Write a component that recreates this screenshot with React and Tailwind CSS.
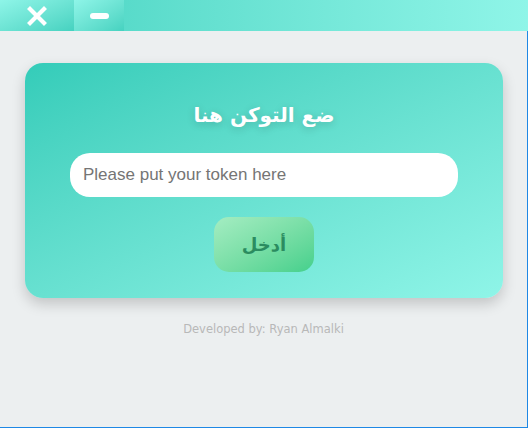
import { useState } from "react";

function TitleBar() {
  return (
    <div className="flex h-[31px] bg-gradient-to-r from-[#43d3c1] to-[#8ff5e8]">
      <button className="flex w-[74px] items-center justify-center bg-gradient-to-br from-[#8ef5e8] to-[#45d2c0]">
        <svg width="20" height="20" viewBox="0 0 20 20">
          <path d="M3 3 L17 17 M17 3 L3 17" stroke="#fff" strokeWidth="4.2" strokeLinecap="square" />
        </svg>
      </button>
      <button className="flex w-[50px] items-center justify-center bg-gradient-to-br from-[#8ef5e8] to-[#45d2c0]">
        <span className="block h-[6px] w-[19px] rounded-full bg-white" />
      </button>
    </div>
  );
}

function App() {
  const [token, setToken] = useState("");

  return (
    <div
      className="flex h-[428px] w-[528px] flex-col bg-[#eceff0]"
      style={{ fontFamily: '"Liberation Sans", Arial, sans-serif' }}
    >
      <TitleBar />
      <div className="flex flex-1 flex-col border-b border-r border-[#1e88e5] px-[25px] pt-[32px]">
        <div className="flex h-[235px] w-[478px] flex-col items-center rounded-[18px] bg-gradient-to-br from-[#33ccb9] to-[#8ff5e8] pt-[38px] shadow-[0_6px_14px_rgba(0,0,0,0.18)]">
          <h1
            className="text-[20px] font-bold leading-[28px] text-white [text-shadow:0_2px_8px_rgba(0,0,0,0.18)]"
            style={{ fontFamily: '"DejaVu Sans", "Noto Sans", sans-serif' }}
            dir="rtl"
          >
            ضع التوكن هنا
          </h1>
          <input
            type="text"
            value={token}
            onChange={(e) => setToken(e.target.value)}
            placeholder="Please put your token here"
            className="mt-[24px] h-[44px] w-[388px] rounded-[20px] bg-white px-[13px] text-[17px] text-[#333] placeholder-[#757575] outline-none"
          />
          <button
            className="mt-[20px] flex h-[55px] w-[100px] items-center justify-center rounded-[15px] bg-gradient-to-br from-[#a4edc2] to-[#43d08c] text-[18px] font-bold text-[#2b8c60]"
            style={{ fontFamily: '"DejaVu Sans", "Noto Sans", sans-serif' }}
          >
            أدخل
          </button>
        </div>
        <p
          className="mt-[23px] text-center text-[11.5px] text-[#b8b8b8]"
          style={{ fontFamily: '"DejaVu Sans", sans-serif' }}
        >
          Developed by: Ryan Almalki
        </p>
      </div>
    </div>
  );
}

export default App;
